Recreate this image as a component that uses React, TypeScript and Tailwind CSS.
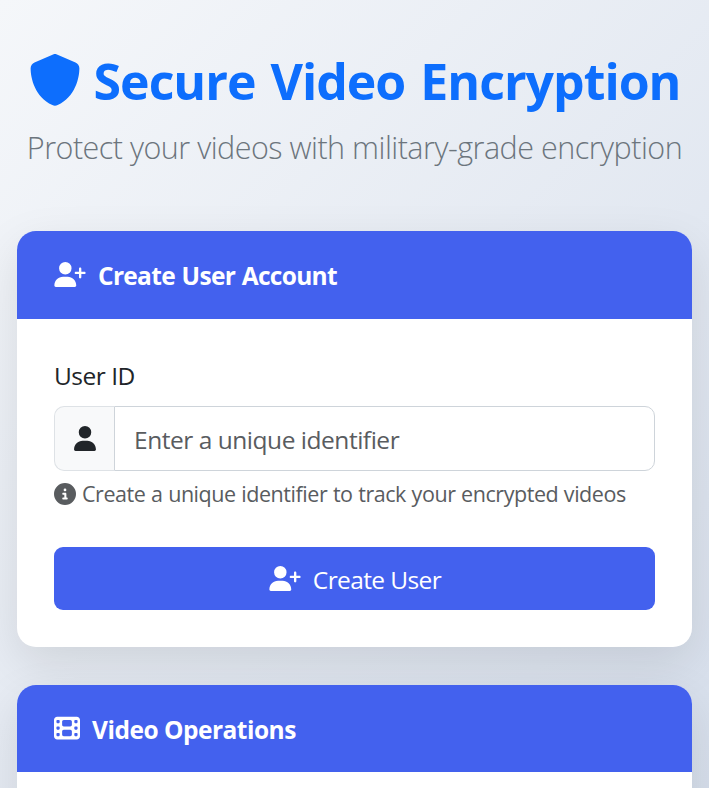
import { FaCircleInfo, FaFilm, FaShield, FaUser, FaUserPlus } from "react-icons/fa6";
import type { ReactNode } from "react";

function CardHeader({ icon, children, className }: { icon: ReactNode; children: ReactNode; className: string }) {
  return (
    <div className={`flex items-center bg-[#4361ee] px-[37px] text-white ${className}`}>
      {icon}
      {children}
    </div>
  );
}

export default function App() {
  return (
    <div className="h-[788px] w-full overflow-hidden bg-[linear-gradient(135deg,#f5f7fa_0px,#c3cfe2_1700px)] px-[17px] font-['Open_Sans','Noto_Sans',sans-serif] text-[#212529]">
      <header className="flex h-[231px] flex-col items-center pt-[46px]">
        <h1 className="flex h-[68px] items-center whitespace-nowrap text-[50px] font-bold leading-none text-[#0d6efd]">
          <FaShield className="mr-[13px] size-[52px] shrink-0" />
          <span className="pt-px tracking-[-1px] [word-spacing:3px]">Secure Video Encryption</span>
        </h1>
        <p className="mt-[10px] whitespace-nowrap text-[30.5px] font-light leading-[47px] tracking-[-0.5px] text-[#6c757d]">
          Protect your videos with military-grade encryption
        </p>
      </header>

      <section className="h-[416px] overflow-visible rounded-[19px] bg-white shadow-[0_16px_47px_rgba(0,0,0,0.1)]">
        <CardHeader className="h-[88px] rounded-t-[19px]" icon={<FaUserPlus className="mb-[2px] mr-[12px] h-[25px] w-[32px] shrink-0" />}>
          <h2 className="whitespace-nowrap pt-[3px] text-[24.5px] font-bold tracking-[-0.7px] [word-spacing:1px]">Create User Account</h2>
        </CardHeader>
        <div className="flex flex-col px-[37px] pt-[38px]">
          <label htmlFor="user-id" className="h-[49px] text-[24.5px] leading-[38px] tracking-[-0.5px]">
            User ID
          </label>
          <div className="flex h-[65px]">
            <span className="flex w-[60px] items-center justify-center rounded-l-[10px] border border-r-0 border-[#dee2e6] bg-[#f8f9fa]">
              <FaUser className="h-[25px] w-[22px]" />
            </span>
            <input
              id="user-id"
              placeholder="Enter a unique identifier"
              className="min-w-0 flex-1 rounded-r-[10px] border border-[#ced4da] bg-white px-[19px] pt-[4px] text-[24.5px] tracking-[-0.47px] outline-none placeholder:text-[#595c5f]"
            />
          </div>
          <p className="mt-[7px] flex h-[33px] items-center whitespace-nowrap text-[21.5px] tracking-[-0.45px] text-[#595c5f] [word-spacing:0.5px]">
            <FaCircleInfo className="mb-[2px] mr-[6px] size-[22px] shrink-0" />
            Create a unique identifier to track your encrypted videos
          </p>
          <button className="mt-[36px] flex h-[63px] items-center justify-center rounded-[9px] bg-[#4361ee] pl-px text-[24.5px] tracking-[-0.6px] text-white">
            <FaUserPlus className="mr-[12px] h-[25px] w-[32px]" />
            <span className="pt-[4px]">Create User</span>
          </button>
        </div>
      </section>

      <section className="mt-[38px] h-[400px] rounded-[19px] bg-white shadow-[0_16px_47px_rgba(0,0,0,0.1)]">
        <CardHeader className="h-[87px] rounded-t-[19px]" icon={<FaFilm className="mb-px mr-[12px] size-[26px] shrink-0" />}>
          <h2 className="whitespace-nowrap pt-[4px] text-[24.5px] font-bold tracking-[-0.5px]">Video Operations</h2>
        </CardHeader>
      </section>
    </div>
  );
}
